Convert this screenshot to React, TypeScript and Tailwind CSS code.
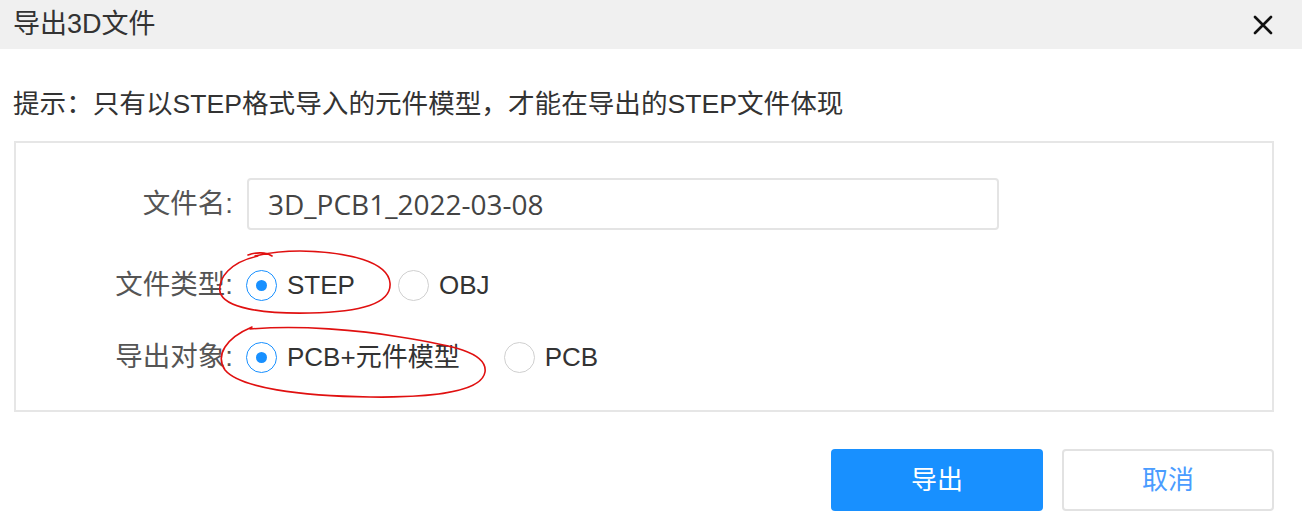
import React from "react";

const font = { fontFamily: '"Liberation Sans", "Noto Sans CJK SC", sans-serif' };

function Radio({ checked, label, mr }: { checked?: boolean; label: string; mr?: string }) {
  return (
    <div className={`flex items-center ${mr ?? ""}`}>
      <div
        className={`flex h-[31px] w-[31px] items-center justify-center rounded-full border-[1.5px] bg-white ${
          checked ? "border-[#1890ff]" : "border-[#d0d0d0]"
        }`}
      >
        {checked && <div className="h-[11px] w-[11px] rounded-full bg-[#1890ff]" />}
      </div>
      <span className="ml-[10px] text-[26px] leading-none text-[#333]">{label}</span>
    </div>
  );
}

export default function App() {
  return (
    <div className="relative h-[517px] w-[1302px] overflow-hidden bg-white" style={font}>
      <div className="flex h-[49px] items-center justify-between bg-[#f0f0f0] pl-[13px] pr-[29px]">
        <span className="text-[27px] leading-none text-[#333]">导出3D文件</span>
        <svg width="20" height="20" viewBox="0 0 20 20">
          <path d="M2 2 L18 18 M18 2 L2 18" stroke="#111" strokeWidth="2.6" strokeLinecap="round" />
        </svg>
      </div>
      <div className="pl-[13px] pt-[42px] text-[26.6px] leading-none text-[#333]">
        提示：只有以STEP格式导入的元件模型，才能在导出的STEP文件体现
      </div>
      <div className="ml-[14px] mr-[28px] mt-[23px] h-[271px] border-2 border-[#e6e6e6] pt-[35px]">
        <div className="flex h-[52px] items-center">
          <div className="w-[217px] text-right text-[27.5px] leading-none text-[#555]">文件名:</div>
          <div className="ml-[14px] flex h-[52px] w-[752px] items-center rounded-[4px] border-2 border-[#e4e4e4] pl-[19px]">
            <span className="text-[28px] leading-none text-[#444]" style={{ fontFamily: '"Open Sans", sans-serif' }}>
              3D_PCB1_2022-03-08
            </span>
          </div>
        </div>
        <div className="mt-[40px] flex h-[31px] items-center">
          <div className="w-[217px] text-right text-[27.5px] leading-none text-[#555]">文件类型:</div>
          <div className="ml-[13px] flex items-center">
            <Radio checked label="STEP" mr="mr-[43px]" />
            <Radio label="OBJ" />
          </div>
        </div>
        <div className="mt-[41px] flex h-[31px] items-center">
          <div className="w-[217px] text-right text-[27.5px] leading-none text-[#555]">导出对象:</div>
          <div className="ml-[13px] flex items-center">
            <Radio checked label="PCB+元件模型" mr="mr-[44px]" />
            <Radio label="PCB" />
          </div>
        </div>
      </div>
      <div className="mr-[28px] mt-[37px] flex justify-end gap-[19px]">
        <button className="flex h-[62px] w-[212px] items-center justify-center rounded-[4px] bg-[#1890ff] text-[26px] leading-none text-white">
          导出
        </button>
        <button className="flex h-[62px] w-[212px] items-center justify-center rounded-[4px] border-2 border-[#e2e2e2] bg-white text-[26px] leading-none text-[#4a9cff]">
          取消
        </button>
      </div>
      <svg className="pointer-events-none absolute left-0 top-0" width="1302" height="517">
        <g fill="none" stroke="#e01010" strokeWidth="1.6" strokeLinecap="round">
          <path d="M248 255 C256 252 266 252 272 256 M258 256 C230 262 218 278 220 292 C224 308 262 314 310 313 C360 312 392 304 390 283 C388 262 350 252 300 251 C285 251 268 253 255 256" />
          <path d="M250 329 C300 325 360 330 400 337 C450 345 488 352 485 372 C482 390 440 398 370 397 C300 396 240 388 225 370 C215 355 226 338 252 327" />
        </g>
      </svg>
    </div>
  );
}
